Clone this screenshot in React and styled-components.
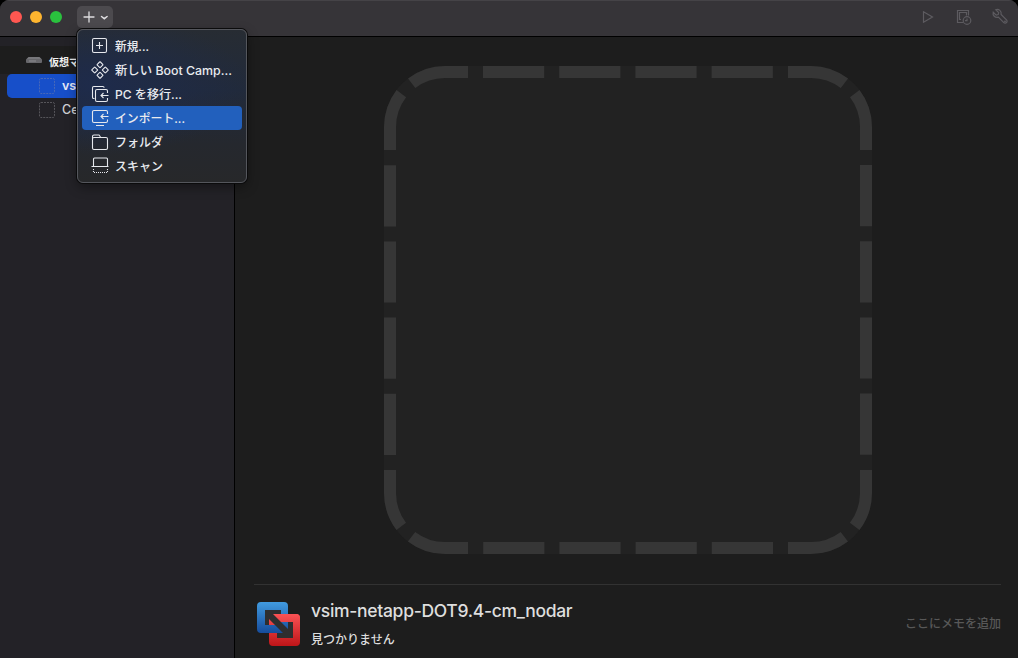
import React from 'react'
import styled, { createGlobalStyle } from 'styled-components'

const menuItems = [
  { id: 'new', label: '新規...', width: 34 },
  { id: 'bootcamp', label: '新しい Boot Camp...', width: 117 },
  { id: 'migrate', label: 'PC を移行...', width: 67 },
  { id: 'import', label: 'インポート...', width: 70 },
  { id: 'folder', label: 'フォルダ', width: 48 },
  { id: 'scan', label: 'スキャン', width: 48 },
]

const machines = [
  { name: 'vsim', selected: true },
  { name: 'Cen', selected: false },
]

function MenuIcon({ id }) {
  return (
    <LineIcon width="18" height="18" viewBox="0 0 18 18">
      {id === 'new' && (
        <>
          <rect x="1.5" y="1.5" width="14" height="14" rx="1.5" />
          <path d="M8.5 5v7M5 8.5h7" />
        </>
      )}
      {id === 'bootcamp' && (
        <>
          <rect x="-2.2" y="-2.2" width="4.4" height="4.4" rx="0.6" transform="translate(9 3.7) rotate(45)" />
          <rect x="-2.2" y="-2.2" width="4.4" height="4.4" rx="0.6" transform="translate(3.7 9) rotate(45)" />
          <rect x="-2.2" y="-2.2" width="4.4" height="4.4" rx="0.6" transform="translate(14.3 9) rotate(45)" />
          <rect x="-2.2" y="-2.2" width="4.4" height="4.4" rx="0.6" transform="translate(9 14.3) rotate(45)" />
        </>
      )}
      {id === 'migrate' && (
        <>
          <path d="M3.5 13.5h-.7a1.3 1.3 0 0 1-1.3-1.3V2.8a1.3 1.3 0 0 1 1.3-1.3h9a1.3 1.3 0 0 1 1.3 1.3" />
          <path d="M16.5 8V6a1.5 1.5 0 0 0-1.5-1.500H6A1.500 1.500 0 0 0 4.500 6v9A1.500 1.500 0 0 0 6 16.500h9a1.500 1.500 0 0 0 1.500-1.500v-2" />
          <path d="M17.500 10.500h-7M12.500 8L10 10.500l2.500 2.500" />
        </>
      )}
      {id === 'import' && (
        <>
          <path d="M16.500 5V3A1.500 1.500 0 0 0 15 1.500H3A1.500 1.500 0 0 0 1.500 3v9A1.500 1.500 0 0 0 3 13.500h12a1.500 1.500 0 0 0 1.500-1.500v-1.500" />
          <path d="M17.500 7.500h-7M12.500 5L10 7.500l2.500 2.500M5 16.500h8" />
        </>
      )}
      {id === 'folder' && (
        <path d="M1.500 5.500V3.500A1.500 1.500 0 0 1 3 2h5l1.500 2M1.500 5.800A1.500 1.500 0 0 1 3 4.500h12a1.500 1.500 0 0 1 1.500 1.500v9a1.500 1.500 0 0 1-1.500 1.500H3A1.500 1.500 0 0 1 1.500 15z" />
      )}
      {id === 'scan' && (
        <>
          <path d="M2.500 9V2a1 1 0 0 1 1-1h12a1 1 0 0 1 1 1v7M.5 9.500h17" />
          <path d="M2.500 12v3.500h14V12" strokeDasharray="1 1" />
        </>
      )}
    </LineIcon>
  )
}

function Placeholder() {
  return (
    <svg width="488" height="488" viewBox="0 0 488 488" fill="none" stroke="#363636" strokeWidth="12">
      <rect width="488" height="488" rx="61" fill="#222222" stroke="none" />
      {[0, 90, 180, 270].map((angle) => (
        <g key={angle} transform={`rotate(${angle} 244 244)`}>
          <path d="M6 84V61A55 55 0 0 1 61 6H84" strokeDasharray="58.9 14.600 70" />
          <path d="M99 6H389" strokeDasharray="61.200 15" />
        </g>
      ))}
    </svg>
  )
}

// the two frames interlock: blue on top at the lower left, red at the upper right
function FusionLogo() {
  return (
    <svg width="45" height="46" viewBox="0 0 45 46">
      <defs>
        <linearGradient id="blue" gradientUnits="userSpaceOnUse" x1="0" y1="1" x2="0" y2="32">
          <stop offset="0" stopColor="#419be0" />
          <stop offset="1" stopColor="#164c9c" />
        </linearGradient>
        <linearGradient id="red" gradientUnits="userSpaceOnUse" x1="0" y1="13" x2="0" y2="45">
          <stop offset="0" stopColor="#fa5255" />
          <stop offset="1" stopColor="#bd1518" />
        </linearGradient>
      </defs>
      <path fill="url(#red)" fillRule="evenodd" d="M17 13h23a4 4 0 0 1 4 4v24a4 4 0 0 1-4 4H17a4 4 0 0 1-4-4V17a4 4 0 0 1 4-4zM21 21v16h16V21z" />
      <path fill="url(#blue)" fillRule="evenodd" d="M5 1h23a4 4 0 0 1 4 4v23a4 4 0 0 1-4 4H5a4 4 0 0 1-4-4V5a4 4 0 0 1 4-4zM9 9v15h16V9z" />
      <path fill="url(#red)" d="M17 13h23a4 4 0 0 1 4 4v4H25z" />
      <path fill="#2e2e2f" d="M9 9h16v4h-8l15 15v-7h5v16H21v-5h6L13 18v6H9z" />
    </svg>
  )
}

export default function App() {
  return (
    <>
      <GlobalStyle />
      <Window>
        <TitleBar>
          <Lights>
            <Light $color="#ff5751" />
            <Light $color="#feb52f" />
            <Light $color="#2ac13e" />
          </Lights>
          <MenuAnchor>
            <AddButton>
              <svg width="36" height="22" viewBox="0 0 36 22" fill="none" stroke="#dedde0" strokeLinecap="round">
                <path d="M12 6v10M7 11h10" strokeWidth="1.300" />
                <path d="M24.500 10.500l2.800 2.200 2.800-2.200" strokeWidth="1.500" />
              </svg>
            </AddButton>
            <Menu>
              {menuItems.map((item) => (
                <MenuRow key={item.id} $active={item.id === 'import'}>
                  <MenuIcon id={item.id} />
                  <svg width={item.width + 4} height="24">
                    <text x="0" y="17" textLength={item.width} lengthAdjust="spacingAndGlyphs" fill="currentColor">{item.label}</text>
                  </svg>
                </MenuRow>
              ))}
            </Menu>
          </MenuAnchor>
          <Tools>
            <svg width="18" height="18" viewBox="0 0 18 18">
              <path d="M4.500 3.800v10.400l9-5.200z" />
            </svg>
            <svg width="18" height="18" viewBox="0 0 18 18">
              <path d="M8 14.500H2.500v-12h11v5M6 11.500H4.500v-7h7v3" />
              <circle cx="12" cy="12.500" r="3.800" />
              <path d="M12 10.500v2.200h-2" />
            </svg>
            <svg width="18" height="18" viewBox="0 0 18 18">
              <path d="M2.200 4.200l3 2.900 2-.5.500-2-2.900-2.900c3-1 6 1.200 5.300 4.800l5.400 5.400a1.900 1.900 0 0 1-2.700 2.700L7.400 9.200c-3.300.8-6.100-1.700-5.200-5z" />
              <circle cx="14" cy="13.500" r=".4" />
            </svg>
          </Tools>
        </TitleBar>
        <Body>
          <Sidebar>
            <GroupHeader>
              <svg width="16" height="6" viewBox="0 0 16 6">
                <path d="M2.500 0h11L16 2.500H0z" fill="#77777b" />
                <rect y="2" width="16" height="4" rx="1" fill="#67676b" />
                <path d="M3 4h7" stroke="#8c8c90" />
              </svg>
              仮想マシン
            </GroupHeader>
            {machines.map((machine) => (
              <MachineRow key={machine.name} $selected={machine.selected}>
                <svg width="16" height="16" viewBox="0 0 16 16" fill="none" stroke={machine.selected ? '#4868b8' : '#56555a'}>
                  <rect x=".5" y=".5" width="15" height="15" rx="1.500" strokeDasharray="2 1" />
                </svg>
                {machine.name}
              </MachineRow>
            ))}
          </Sidebar>
          <Content>
            <Preview>
              <Placeholder />
            </Preview>
            <Details>
              <FusionLogo />
              <Info>
                <Name>vsim-netapp-DOT9.4-cm_nodar</Name>
                <Status>見つかりません</Status>
              </Info>
              <Memo>ここにメモを追加</Memo>
            </Details>
          </Content>
        </Body>
      </Window>
    </>
  )
}

const GlobalStyle = createGlobalStyle`
  body {
    margin: 0;
    background: #000;
    font-family: Inter, "Noto Sans CJK JP", sans-serif;
  }
  * {
    box-sizing: border-box;
  }
  svg {
    display: block;
    flex: none;
  }
`;

const Window = styled.div`
  width: 1018px;
  height: 658px;
  display: flex;
  flex-direction: column;
  overflow: hidden;
  border-radius: 9px 9px 0 0;
  background: #1d1d1d;
`;

const TitleBar = styled.header`
  height: 37px;
  flex: none;
  display: flex;
  align-items: flex-start;
  background: #363438;
  border-top: 1px solid #454347;
  border-bottom: 1px solid #000;
`;

const Lights = styled.div`
  display: flex;
  gap: 8px;
  padding: 10px 0 0 10px;
  width: 77px;
`;

const Light = styled.span`
  width: 12px;
  height: 12px;
  border-radius: 50%;
  background: ${(props) => props.$color};
`;

const MenuAnchor = styled.div`
  position: relative;
  padding-top: 5px;
`;

const AddButton = styled.button`
  display: block;
  width: 36px;
  height: 22px;
  padding: 0;
  border: 0;
  border-radius: 5px;
  background: #4c4a4e;
`;

const Menu = styled.div`
  position: absolute;
  z-index: 2;
  top: 28px;
  left: 0;
  width: 170px;
  height: 154px;
  padding: 4px;
  border: 1px solid #54565c;
  border-radius: 6px;
  background:
    radial-gradient(ellipse 150px 70px at 20px 55px, #1e2b4b, transparent),
    linear-gradient(#272c33, #212a3b 40%, #25282e 75%, #27282a);
  box-shadow: 0 0 0 1px #0b0b0c, 0 4px 12px rgba(0, 0, 0, 0.4);
`;

const MenuRow = styled.div`
  height: 24px;
  display: flex;
  align-items: center;
  gap: 6px;
  padding-left: 9px;
  border-radius: 4px;
  color: #e8eaee;
  font-size: 12px;
  font-weight: 500;
  background: ${(props) => (props.$active ? '#2260bd' : 'transparent')};
`;

const LineIcon = styled.svg`
  fill: none;
  stroke: #e6e8ed;
  stroke-width: 1.1;
`;

const Tools = styled.div`
  display: flex;
  gap: 18px;
  margin-left: auto;
  padding: 7px 9px 0 0;
  svg {
    fill: none;
    stroke: #5d5b60;
    stroke-width: 1.2;
  }
`;

const Body = styled.div`
  flex: 1;
  display: flex;
  min-height: 0;
`;

const Sidebar = styled.aside`
  width: 235px;
  padding-top: 9px;
  overflow: hidden;
  background: #232227;
  border-right: 1px solid #000;
`;

const GroupHeader = styled.div`
  height: 28px;
  display: flex;
  align-items: center;
  gap: 7px;
  padding: 2px 0 0 26px;
  background: #1d1d1d;
  color: #f0f0f0;
  font-size: 10px;
  font-weight: 700;
  svg {
    margin-top: -3px;
  }
`;

const MachineRow = styled.div`
  height: 24px;
  display: flex;
  align-items: center;
  gap: 7px;
  margin: 0 7px;
  padding-left: 32px;
  border-radius: 5px;
  white-space: nowrap;
  font-size: 12.5px;
  line-height: 14px;
  font-weight: ${(props) => (props.$selected ? 600 : 500)};
  color: ${(props) => (props.$selected ? '#e4e9f8' : '#d0d0d2')};
  background: ${(props) => (props.$selected ? '#174fc9' : 'transparent')};
`;

const Content = styled.main`
  flex: 1;
  display: flex;
  flex-direction: column;
  padding: 0 17px 0 19px;
`;

const Preview = styled.div`
  height: 547px;
  padding-top: 29px;
  display: flex;
  justify-content: center;
`;

const Details = styled.section`
  flex: 1;
  display: flex;
  align-items: flex-start;
  padding: 16px 0 0 2px;
  border-top: 1px solid #323232;
`;

const Info = styled.div`
  padding-left: 10px;
`;

const Name = styled.div`
  font-size: 17.5px;
  line-height: 20px;
  font-weight: 500;
  letter-spacing: -0.3px;
  color: #dedede;
`;

const Status = styled.div`
  margin-top: 10px;
  font-size: 12px;
  line-height: 18px;
  font-weight: 500;
  color: #dedede;
`;

const Memo = styled.div`
  margin: 14px 0 0 auto;
  font-size: 12px;
  line-height: 18px;
  font-weight: 500;
  color: #585858;
`;
